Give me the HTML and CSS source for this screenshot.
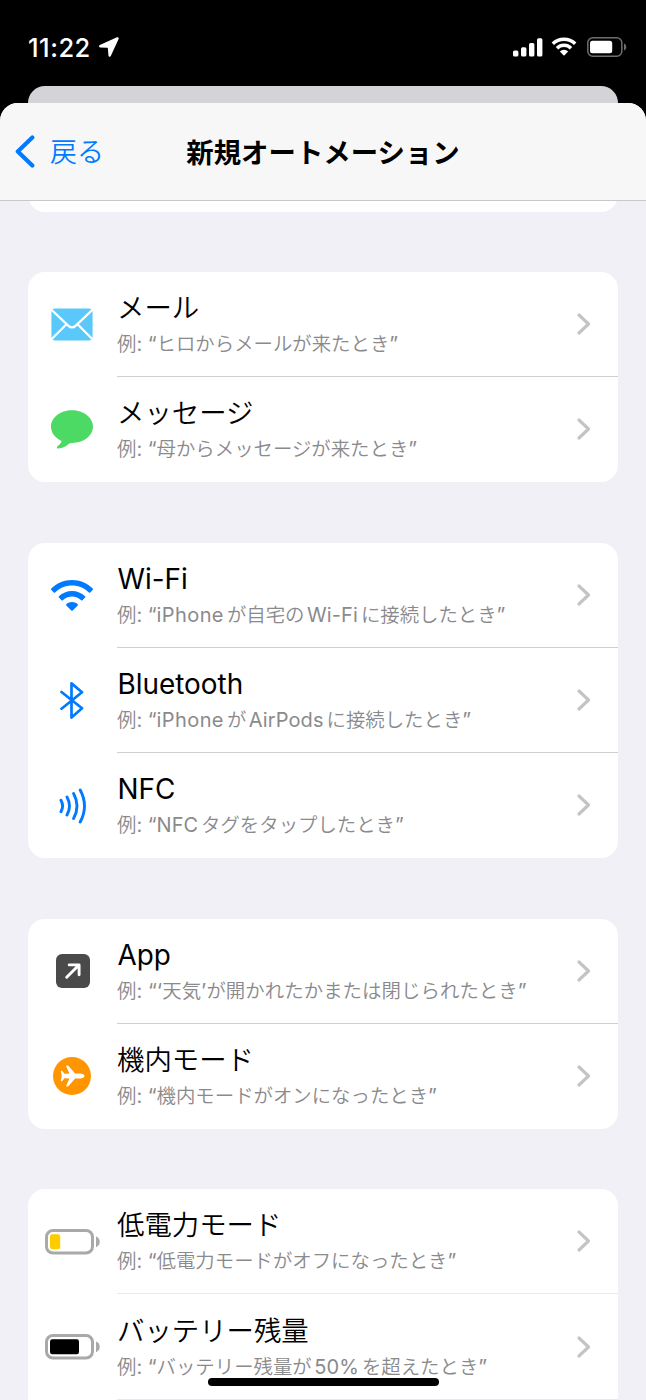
FILE: index.html
```html
<!DOCTYPE html>
<html lang="ja">
<head>
<meta charset="utf-8">
<title>新規オートメーション</title>
<link rel="stylesheet" href="styles.css">
</head>
<body>
<svg class="defs" width="0" height="0" aria-hidden="true">
  <symbol id="chevron" viewBox="0 0 14 22"><path d="M2 2 L11.5 11 L2 20" fill="none" stroke="#c4c4c6" stroke-width="3.1" stroke-linecap="round" stroke-linejoin="round"/></symbol>
  <symbol id="wifi" viewBox="0 0 42 31">
    <path fill="currentColor" d="M21 0C12.9 0 5.500 3.300.3 8.600c-.4.400-.4.900 0 1.300l2.500 2.500c.4.400.9.400 1.300 0C8.500 8 14.500 5.400 21 5.400s12.500 2.600 16.900 7c.4.400.9.400 1.300 0l2.500-2.500c.4-.4.400-.9 0-1.300C36.500 3.300 29.100 0 21 0z"/>
    <path fill="currentColor" d="M21 11c-5 0-9.700 2-13.100 5.300-.4.400-.4.900 0 1.300l2.600 2.600c.4.400.9.400 1.300 0 2.400-2.300 5.600-3.700 9.200-3.700s6.800 1.400 9.200 3.700c.4.400.9.400 1.300 0l2.600-2.600c.4-.4.400-.9 0-1.300C30.700 13 26 11 21 11z"/>
    <path fill="currentColor" d="M21 22c-2.100 0-4.100.8-5.600 2.100-.5.400-.5.900-.1 1.300l5 5c.4.400 1 .4 1.400 0l5-5c.4-.4.400-.9-.1-1.300C25.100 22.800 23.100 22 21 22z"/>
  </symbol>
</svg>
<div class="screen">
  <div class="status">
    <div class="status-left">
      <span class="time">11:22</span>
      <svg width="20" height="20" viewBox="0 0 20 20"><path d="M18.500 1.400 1.300 9.200 8.600 9.600Q9.900 9.700 10 11L10.700 18.600z" fill="#fff" stroke="#fff" stroke-width="2.400" stroke-linejoin="round"/></svg>
    </div>
    <div class="status-right">
      <svg width="30" height="19" viewBox="0 0 30 19" fill="#fff"><rect x="0" y="12.500" width="5.400" height="6" rx="1.500"/><rect x="8" y="9.300" width="5.400" height="9.200" rx="1.500"/><rect x="16" y="5" width="5.400" height="13.500" rx="1.500"/><rect x="24" y=".3" width="5.400" height="18.200" rx="1.500"/></svg>
      <svg class="status-wifi" width="26" height="19" viewBox="0 0 26 19"><path d="M1.800 6.800A16.200 16.200 0 0 1 24.200 6.800M6 11.200A10 10 0 0 1 20 11.200" fill="none" stroke="#fff" stroke-width="3.500"/><path d="M13 18.700 8.800 14.500A6.200 6.200 0 0 1 17.200 14.500z" fill="#fff"/></svg>
      <svg class="status-batt" width="40" height="20" viewBox="0 0 40 20"><rect x=".8" y=".8" width="34" height="18.400" rx="5" fill="none" stroke="#6e6e6e" stroke-width="1.500"/><rect x="3" y="3.700" width="22.200" height="12.600" rx="2.500" fill="#fff"/><path d="M37 6.500c3 1.300 3 5.700 0 7z" fill="#6e6e6e"/></svg>
    </div>
  </div>
  <div class="back-sheet"></div>
  <div class="sheet">
    <header class="nav">
      <div class="back">
        <svg width="20" height="33" viewBox="0 0 20 33"><path d="M17.300 2.500 L2.800 16.500 L17.300 30.500" fill="none" stroke="#007aff" stroke-width="4.200" stroke-linecap="round" stroke-linejoin="round"/></svg>
        <span>戻る</span>
      </div>
      <h1>新規オートメーション</h1>
    </header>
    <main class="list">
      <section class="card stub"></section>

      <section class="card">
        <div class="row">
          <div class="icon"><svg width="42" height="33" viewBox="0 0 42 33"><rect x=".4" y=".4" width="41.200" height="32.200" rx="4" fill="#5ac8fa"/><path d="M0 1.300 17.200 17.600c2.300 2.200 5.300 2.200 7.600 0L42 1.300M0 31.700 15.200 16.500M42 31.700 26.800 16.500" fill="none" stroke="#fff" stroke-width="2.200"/></svg></div>
          <div class="text"><div class="title">メール</div><div class="sub"><i>例</i>: “<i>ヒロからメールが来たとき</i>”</div></div>
          <svg class="chev" width="14" height="22"><use href="#chevron"/></svg>
        </div>
        <div class="row">
          <div class="icon"><svg width="42" height="39" viewBox="0 0 42 39"><path fill="#4cd964" d="M21 .2C9.400.2 0 7.400 0 16.600c0 6.100 3.900 11.200 10.100 14.200.5.300.5.700.2 1.200-.8 1.500-2.100 2.900-3.800 4.200-1.100.9-.8 2.500.9 2.400 4.300-.3 7.800-2.400 10.500-4.800.8-.7 1.400-.8 3.100-.8C32.600 33 42 25.800 42 16.600S32.600.2 21 .2z"/></svg></div>
          <div class="text"><div class="title">メッセージ</div><div class="sub"><i>例</i>: “<i>母からメッセージが来たとき</i>”</div></div>
          <svg class="chev" width="14" height="22"><use href="#chevron"/></svg>
        </div>
      </section>

      <section class="card">
        <div class="row">
          <div class="icon blue"><svg width="42" height="31"><use href="#wifi"/></svg></div>
          <div class="text"><div class="title latin">Wi-Fi</div><div class="sub"><i>例</i>: “<span class="en">iPhone</span><i class="g">が自宅の</i><b>Wi-Fi</b><i class="g">に接続したとき</i>”</div></div>
          <svg class="chev" width="14" height="22"><use href="#chevron"/></svg>
        </div>
        <div class="row">
          <div class="icon blue bt"><svg width="24" height="39" viewBox="0 0 24 39"><path d="M1.500 11 22 27.300 11.500 36.600V2.400L22 11.300 1.500 27.700" fill="none" stroke="currentColor" stroke-width="2.700" stroke-linecap="round" stroke-linejoin="round"/></svg></div>
          <div class="text"><div class="title latin">Bluetooth</div><div class="sub"><i>例</i>: “<span class="en">iPhone</span><i class="g">が</i><b>AirPods</b><i class="g">に接続したとき</i>”</div></div>
          <svg class="chev" width="14" height="22"><use href="#chevron"/></svg>
        </div>
        <div class="row">
          <div class="icon blue shift"><svg width="28" height="36" viewBox="0 0 28 36"><path d="M2 12.300Q5.200 18 2 23.700M8 9Q13 18 8 27M14.600 5.500Q21.400 18 14.600 30.500M21.200 2Q29.800 18 21.200 34" fill="none" stroke="currentColor" stroke-width="2.900" stroke-linecap="round"/></svg></div>
          <div class="text"><div class="title latin">NFC</div><div class="sub"><i>例</i>: “NFC<i class="g">タグをタップしたとき</i>”</div></div>
          <svg class="chev" width="14" height="22"><use href="#chevron"/></svg>
        </div>
      </section>

      <section class="card">
        <div class="row">
          <div class="icon shift"><svg width="34" height="34" viewBox="0 0 34 34"><rect width="34" height="34" rx="6" fill="#4a4a4a"/><path d="M10.700 23.300 22.500 11.500M13.200 10.900H23.100V20.800" fill="none" stroke="#fff" stroke-width="2.900" stroke-linecap="round" stroke-linejoin="round"/></svg></div>
          <div class="text"><div class="title latin">App</div><div class="sub wide"><i>例</i>: “‘<i>天気</i>’<i>が開かれたかまたは閉じられたとき</i>”</div></div>
          <svg class="chev" width="14" height="22"><use href="#chevron"/></svg>
        </div>
        <div class="row">
          <div class="icon"><svg width="38" height="38" viewBox="0 0 38 38"><circle cx="19" cy="19" r="19" fill="#ff9500"/><path fill="#fff" d="M31.500 19c0-1.500-2-2.500-4.400-2.500h-5L15.800 9.300c-.4-.5-.9-.7-1.500-.7h-.7c-.4 0-.6.300-.4.700l3.200 7.200-4.900.2-2-2.500c-.2-.3-.5-.4-.8-.4h-.4c-.3 0-.5.200-.5.500L8.700 19l-.9 4.700c0 .3.200.5.500.5h.4c.3 0 .6-.1.800-.4l2-2.500 4.900.2-3.200 7.200c-.2.400 0 .7.400.7h.7c.6 0 1.100-.2 1.500-.7l6.300-7.200h5c2.400 0 4.400-1 4.400-2.500z"/></svg></div>
          <div class="text"><div class="title">機内モード</div><div class="sub"><i>例</i>: “<i>機内モードがオンになったとき</i>”</div></div>
          <svg class="chev" width="14" height="22"><use href="#chevron"/></svg>
        </div>
      </section>

      <section class="card last">
        <div class="row light">
          <div class="icon"><svg width="55" height="26" viewBox="0 0 55 26"><rect x="1.500" y="1.500" width="46" height="22.500" rx="6.500" fill="none" stroke="#a9a9a9" stroke-width="3"/><rect x="5" y="5.200" width="10.200" height="15" rx="2.200" fill="#ffcc00"/><path d="M51 7.500c5 1.500 5 9.200 0 10.700z" fill="#a9a9a9"/></svg></div>
          <div class="text"><div class="title">低電力モード</div><div class="sub"><i>例</i>: “<i>低電力モードがオフになったとき</i>”</div></div>
          <svg class="chev" width="14" height="22"><use href="#chevron"/></svg>
        </div>
        <div class="row light">
          <div class="icon"><svg width="55" height="26" viewBox="0 0 55 26"><rect x="1.500" y="1.500" width="46" height="22.500" rx="6.500" fill="none" stroke="#a9a9a9" stroke-width="3"/><rect x="5" y="5.200" width="29" height="15" rx="2.200" fill="#000"/><path d="M51 7.500c5 1.500 5 9.200 0 10.700z" fill="#a9a9a9"/></svg></div>
          <div class="text"><div class="title">バッテリー残量</div><div class="sub"><i>例</i>: “<i>バッテリー残量が</i><b>50%</b><i class="g">を超えたとき</i>”</div></div>
          <svg class="chev" width="14" height="22"><use href="#chevron"/></svg>
        </div>
        <div class="row"></div>
      </section>
    </main>
  </div>
  <div class="home"></div>
</div>
</body>
</html>
```
FILE: styles.css
```css
* { box-sizing: border-box; }
body {
  margin: 0;
  background: #000;
  font-family: Inter, "Noto Sans CJK JP", sans-serif;
}
.defs { position: absolute; }
.screen {
  position: relative;
  display: flex;
  flex-direction: column;
  width: 646px;
  height: 1400px;
  overflow: hidden;
  background: #000;
}
.status {
  display: flex;
  flex: none;
  justify-content: space-between;
  height: 86px;
  padding: 37px 19px 0 28px;
  color: #fff;
}
.status-left, .status-right { display: flex; align-items: flex-start; }
.status-left { gap: 8px; }
.time { font-size: 25.500px; font-weight: 550; line-height: 21px; letter-spacing: 0.5px; }
.status-right { padding-top: 1px; }
.status-wifi { margin-left: 8px; margin-top: -1px; }
.status-batt { margin-left: 10px; margin-top: -1px; }
.back-sheet {
  flex: none;
  height: 36px;
  margin: 0 28px -19px;
  border-radius: 17px 17px 0 0;
  background: #d4d3d8;
}
.sheet {
  position: relative;
  flex: 1;
  overflow: hidden;
  border-radius: 18px 18px 0 0;
  background: #f1f0f6;
}
.nav {
  position: relative;
  z-index: 1;
  display: grid;
  grid-template-columns: 170px 1fr 170px;
  align-items: center;
  height: 98px;
  border-bottom: 1px solid #c8c8ca;
  background: #f7f7f8;
}
.back { display: flex; align-items: center; gap: 15px; padding-left: 15px; color: #007aff; font-size: 27px; font-weight: 350; line-height: 36px; }
.back span { padding-top: 3px; }
h1 { margin: 0; padding-top: 2px; font-size: 27.400px; font-weight: 600; line-height: 36px; text-align: center; white-space: nowrap; }
.list { display: flex; flex-direction: column; gap: 60.400px; padding: 0 28px; }
.card { overflow: hidden; border-radius: 17px; background: #fff; }
.stub { height: 40px; margin-top: -29.400px; }
.row {
  position: relative;
  display: flex;
  align-items: center;
  height: 105.170px;
  padding-right: 27px;
}
.row:not(:last-child)::after {
  content: "";
  position: absolute;
  right: 0;
  bottom: 0;
  left: 89px;
  height: 1px;
  background: #cfcfd1;
}
.row.light::after { background: #e9e9eb !important; }
.icon { display: flex; justify-content: center; width: 89px; padding-right: 1px; }
.icon.bt { padding-right: 2px; }
.icon.shift { padding-right: 0; }
.icon svg { flex: none; }
.chev { margin-bottom: 1px; }
.blue { color: #007aff; }
.text { flex: 1; padding-bottom: 1px; white-space: nowrap; }
.title { font-size: 27.400px; font-weight: 350; line-height: 34px; color: #000; }
.latin { padding-left: 0.500px; font-size: 27.900px; font-weight: 400; }
.sub { margin-top: 6px; font-size: 20px; line-height: 26px; color: #8a8a8c; }
.sub i { font-style: normal; font-weight: 350; font-size: 19.400px; }
.sub b { margin-left: 2.500px; font-weight: 400; letter-spacing: 0.1px; }
.sub .en { letter-spacing: 0.4px; }
.sub .g { margin-left: 3px; }
.sub.wide { letter-spacing: 0.07px; }
.home {
  position: absolute;
  bottom: 14px;
  left: 208px;
  width: 231px;
  height: 8px;
  border-radius: 4px;
  background: #000;
}
```
